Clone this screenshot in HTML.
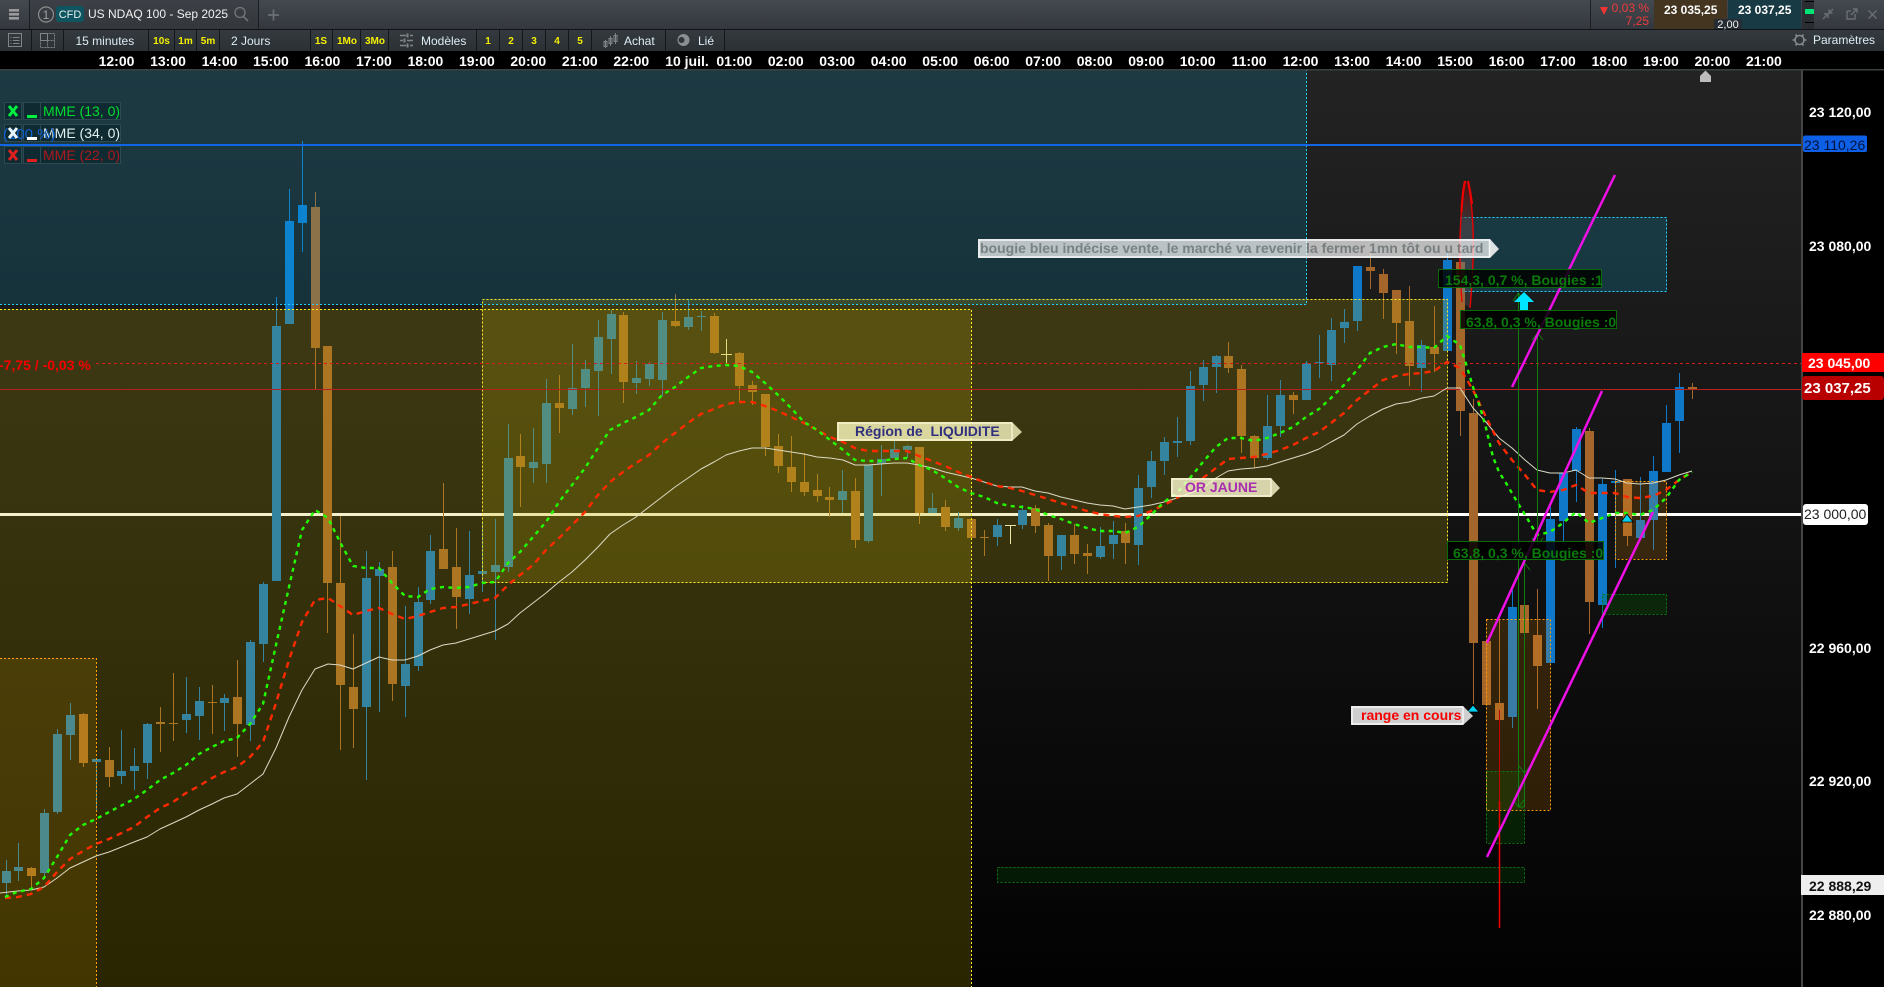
<!DOCTYPE html>
<html lang="fr"><head><meta charset="utf-8"><title>US NDAQ 100</title>
<style>html,body{margin:0;padding:0;background:#000;width:1884px;height:987px;overflow:hidden}svg{display:block;font-family:"Liberation Sans",sans-serif}</style></head>
<body>
<svg xmlns="http://www.w3.org/2000/svg" width="1884" height="987" viewBox="0 0 1884 987">
<defs>
<linearGradient id="bg" x1="0" y1="0" x2="0" y2="1"><stop offset="0" stop-color="#232323"/><stop offset="1" stop-color="#020202"/></linearGradient>
<linearGradient id="top" x1="0" y1="0" x2="0" y2="1"><stop offset="0" stop-color="#444950"/><stop offset="1" stop-color="#34383e"/></linearGradient>
<linearGradient id="tab" x1="0" y1="0" x2="0" y2="1"><stop offset="0" stop-color="#3d4147"/><stop offset="1" stop-color="#33373c"/></linearGradient>
<linearGradient id="tool" x1="0" y1="0" x2="0" y2="1"><stop offset="0" stop-color="#343a3f"/><stop offset="1" stop-color="#2b3034"/></linearGradient>
<linearGradient id="ell" x1="0" y1="0" x2="0" y2="1"><stop offset="0" stop-color="rgba(120,0,0,.55)"/><stop offset=".3" stop-color="rgba(110,70,70,.4)"/><stop offset="1" stop-color="rgba(120,110,110,.25)"/></linearGradient>
</defs>
<!-- chart bg -->
<rect x="0" y="70" width="1801" height="917" fill="url(#bg)"/>
<rect x="1801" y="70" width="83" height="917" fill="#000"/>
<!-- white level under zones -->
<rect x="0" y="513" width="1801" height="3" fill="#fff"/>
<!-- candles wicks -->
<g shape-rendering="crispEdges" fill="none">
<path stroke="#1078c8" stroke-width="1" d="M6.5 860V897M18.5 843V881M44.5 809V876M57.5 729V814M70.5 703V760M96.5 759V810M121.5 730V784M134.5 748V790M147.5 723V779M186.5 677V733M199.5 687V740M224.5 694V731M250.5 640V741M263.5 582V662M276.5 297V581M289.5 189V324M302.5 141V252M366.5 551V780M379.5 562V712M405.5 606V717M418.5 587V671M430.5 535V604M469.5 531V614M482.5 523V592M495.5 519V640M508.5 424V572M533.5 428V483M546.5 379V483M572.5 344V415M585.5 360V407M598.5 320V416M611.5 310V374M636.5 361V394M649.5 362V386M662.5 312V396M688.5 299V330M701.5 311V331M842.5 470V513M868.5 465V543M881.5 445V496M894.5 440V458M907.5 445V458M932.5 493V513M958.5 512V531M997.5 519V546M1022.5 505V529M1061.5 535V570M1100.5 527V559M1113.5 521V559M1138.5 475V565M1151.5 451V498M1164.5 437V475M1177.5 417V457M1190.5 371V445M1203.5 360V401M1216.5 355V393M1267.5 395V460M1280.5 380V437M1306.5 361V400M1319.5 335V378M1331.5 318V381M1344.5 309V343M1357.5 266V331M1421.5 340V392M1447.5 253V351M1512.5 590V728M1550.5 507V663M1563.5 473V542M1576.5 427V502M1602.5 479V628M1615.5 470V568M1640.5 477V538M1653.5 456V550M1666.5 405V472M1679.5 373V453"/>
<path stroke="#a5662b" stroke-width="1" d="M31.5 867V890M83.5 713V767M109.5 747V787M160.5 707V752M173.5 673V741M212.5 685V734M237.5 660V757M315.5 192V389M327.5 346V633M340.5 516V750M353.5 634V748M392.5 551V701M443.5 483V569M456.5 528V629M520.5 434V507M559.5 375V433M623.5 312V403M675.5 294V327M714.5 313V354M739.5 352V402M752.5 381V405M765.5 394V456M778.5 434V473M791.5 436V492M804.5 453V496M817.5 474V502M829.5 487V517M855.5 478V548M919.5 447V524M945.5 500V531M971.5 519V538M984.5 530V556M1035.5 505V533M1048.5 523V581M1074.5 524V564M1087.5 544V574M1125.5 523V564M1228.5 342V373M1241.5 365V453M1254.5 435V468M1293.5 392V414M1370.5 253V289M1383.5 269V319M1396.5 290V354M1409.5 286V386M1434.5 306V372M1460.5 262V436M1473.5 399V704M1486.5 641V705M1499.5 620V720M1524.5 605V633M1537.5 589V709M1589.5 428V634M1627.5 479V546M1692.5 383V399"/>
<!-- candle bodies -->
<path stroke="#1078c8" stroke-width="9" d="M6.5 871V883M18.5 867V871M44.5 813V873M57.5 734V812M70.5 715V735M96.5 759V762M121.5 771V776M134.5 766V771M147.5 724V763M186.5 714V720M199.5 701V716M224.5 698V703M250.5 642V725M263.5 584V644M276.5 326V581M289.5 221V324M302.5 205V223M366.5 578V707M379.5 569V576M405.5 664V686M418.5 602V666M430.5 551V600M469.5 575V599M482.5 571V574M495.5 565V572M508.5 458V567M533.5 462V468M546.5 403V464M572.5 388V409M585.5 369V388M598.5 337V371M611.5 314V339M636.5 378V383M649.5 364V379M662.5 320V380M688.5 317V327M701.5 316V317M842.5 491V500M868.5 465V541M881.5 459V464M894.5 449V458M907.5 446V450M932.5 508V513M958.5 518V528M997.5 525V537M1022.5 510V525M1061.5 535V556M1100.5 546V557M1113.5 535V544M1138.5 488V545M1151.5 461V487M1164.5 442V461M1177.5 441V443M1190.5 386V441M1203.5 367V385M1216.5 356V367M1267.5 426V458M1280.5 395V426M1306.5 363V400M1319.5 362V363M1331.5 330V365M1344.5 322V328M1357.5 266V321M1421.5 345V368M1447.5 260V351M1512.5 607V717M1550.5 519V663M1563.5 473V521M1576.5 429V471M1602.5 484V605M1615.5 481V483M1640.5 520V538M1653.5 471V520M1666.5 423V472M1679.5 387V421"/>
<path stroke="#a5662b" stroke-width="9" d="M31.5 868V876M83.5 714V763M109.5 760V777M160.5 722V724M173.5 723V724M212.5 702V703M237.5 697V724M315.5 207V348M327.5 346V583M340.5 583V685M353.5 687V709M392.5 567V684M443.5 549V569M456.5 567V597M520.5 456V467M559.5 403V408M623.5 315V382M675.5 321V326M714.5 316V353M739.5 353V386M752.5 385V392M765.5 394V447M778.5 446V466M791.5 467V482M804.5 482V492M817.5 490V496M829.5 497V500M855.5 491V540M919.5 447V513M945.5 507V527M971.5 519V538M984.5 537V538M1035.5 508V526M1048.5 525V556M1074.5 535V554M1087.5 553V556M1125.5 531V543M1228.5 356V368M1241.5 369V436M1254.5 436V458M1293.5 395V400M1370.5 267V271M1383.5 274V293M1396.5 290V323M1409.5 321V366M1434.5 347V354M1460.5 262V411M1473.5 413V643M1486.5 641V705M1499.5 703V720M1524.5 605V633M1537.5 635V666M1589.5 431V602M1627.5 479V536M1692.5 387V389"/>
<path stroke="#f5f0d0" stroke-width="1" d="M726.5 339V365M721 354.5H732M1010.5 525V544M1005 525.5H1016"/>
</g>
<!-- zones -->
<g shape-rendering="crispEdges">
<rect x="0" y="70" width="1307" height="234.5" fill="rgba(0,190,250,.15)"/>
<rect x="0" y="309" width="971.5" height="678" fill="rgba(198,180,0,.2)"/>
<rect x="482" y="299" width="966" height="284" fill="rgba(198,180,0,.2)"/>
<rect x="0" y="658" width="96.5" height="329" fill="rgba(255,170,0,.12)"/>
<rect x="1460" y="217" width="207" height="75" fill="rgba(0,190,250,.17)"/>
<rect x="1486" y="619.5" width="64.5" height="190.5" fill="rgba(255,150,0,.16)"/>
<rect x="1615" y="481.5" width="52" height="77.5" fill="rgba(255,150,0,.16)"/>
<rect x="1486" y="771" width="38.5" height="72" fill="rgba(0,130,0,.2)"/>
<rect x="1602" y="594" width="65" height="20" fill="rgba(0,130,0,.2)"/>
<rect x="997" y="867" width="527.5" height="15" fill="rgba(0,130,0,.17)"/>
<g fill="none" stroke-width="1" stroke-dasharray="2 2">
<path stroke="#25d0ff" d="M0 304.5H1306.5V70M1460.5 217.5H1666.5V291.5H1460.5Z"/>
<path stroke="#ffee22" d="M0 309.5H971.5V987M482.5 299.5H1447.5V582.5H482.5Z"/>
<path stroke="#ffa000" d="M0 658.5H96.5V987M1486.5 619.5H1550.5V810.5H1486.5ZM1615.5 481.5H1666.5V559.5H1615.5Z"/>
<path stroke="#0c7a18" d="M1486.5 771.5H1524.5V843.5H1486.5ZM1602.5 594.5H1666.5V614.5H1602.5ZM997.5 867.5H1524.5V882.5H997.5Z"/>
</g>
<!-- levels -->
<rect x="0" y="144" width="1801" height="2" fill="#1166e6"/>
<rect x="0" y="389" width="1801" height="1" fill="#b82020"/>
<path d="M96 363.5H1801" stroke="#d81c1c" stroke-width="1" stroke-dasharray="3 3" fill="none"/>
</g>
<text x="-1" y="370" font-size="14" font-weight="700" fill="#f40000">-7,75 / -0,03 %</text>
<!-- moving averages -->
<g fill="none" stroke-linejoin="round">
<polyline stroke="#dcdac4" stroke-width="1" points="0,893 18,891 31,890 44,887 57,878 70,868 83,862 96,856 109,852 134,842 147,837 160,829 173,823 186,817 199,810 212,804 224,798 237,794 250,784 263,774 276,748 289,717 302,690 315,669 328,664 340,665 353,669 366,663 379,657 392,660 405,660 418,656 430,650 443,645 456,643 469,639 482,635 495,631 508,624 520,613 533,603 546,593 559,582 572,572 585,560 598,547 610,534 623,525 636,517 649,507 662,497 675,487 688,478 701,469 714,462 726,455 739,451 752,448 765,448 778,450 791,452 804,454 817,457 830,458 843,460 855,465 868,465 881,464 894,463 907,463 919,465 932,468 945,472 958,475 971,478 984,482 997,486 1010,487 1022,487 1035,491 1048,493 1061,497 1074,500 1087,503 1100,505 1113,506 1125,509 1138,507 1151,505 1164,502 1177,498 1190,493 1203,488 1216,478 1228,471 1241,469 1254,468 1267,466 1280,462 1293,458 1306,454 1319,449 1331,442 1344,435 1357,424 1370,416 1383,409 1396,404 1409,402 1422,398 1434,396 1447,388 1460,388 1473,408 1486,422 1499,438 1512,448 1525,460 1537,470 1550,473 1563,473 1576,470 1589,478 1602,478 1615,479 1627,483 1640,484 1653,483 1666,480 1679,475 1692,471"/>
<polyline stroke="#ff2a00" stroke-width="2.4" stroke-dasharray="6 5" points="5,898 18,897 31,894 44,887 57,872 70,859 83,851 96,844 109,839 134,827 147,817 160,808 173,802 186,793 199,786 212,778 224,772 237,767 250,757 263,742 276,703 289,660 302,622 315,600 328,598 340,606 353,615 366,611 379,608 392,614 405,619 418,616 430,612 443,608 456,607 469,604 482,601 495,598 508,585 520,575 533,565 546,550 559,538 572,525 585,512 598,495 610,482 623,472 636,463 649,455 662,443 675,433 688,423 701,414 714,409 726,404 739,402 752,402 765,406 778,411 791,417 804,423 817,430 830,437 843,442 855,448 868,451 881,451 894,451 907,451 919,456 932,461 945,466 958,472 971,477 984,482 997,486 1010,488 1022,491 1035,495 1048,499 1061,503 1074,507 1087,511 1100,514 1113,516 1125,517 1138,516 1151,511 1164,505 1177,498 1190,488 1203,478 1216,468 1228,459 1241,458 1254,457 1267,454 1280,450 1293,445 1306,438 1319,432 1331,423 1344,413 1357,400 1370,390 1383,380 1396,376 1409,374 1422,373 1434,371 1447,362 1460,368 1473,390 1486,417 1499,443 1512,460 1525,475 1537,490 1550,492 1563,490 1576,485 1589,493 1602,493 1615,493 1627,497 1640,498 1653,496 1666,490 1679,480 1692,472"/>
<polyline stroke="#22ff00" stroke-width="2.4" stroke-dasharray="4 4.5" points="5,897 17,892 31,889 44,878 57,857 70,835 83,825 96,819 109,812 134,799 147,790 160,780 173,773 186,765 199,754 212,747 224,741 237,738 250,724 263,704 276,645 289,587 302,530 315,510 328,518 340,542 353,566 366,568 379,568 392,583 405,596 418,597 430,589 443,587 456,588 469,587 482,583 495,582 508,563 520,552 533,537 546,522 559,502 572,485 585,468 598,448 610,430 623,423 636,417 649,410 662,395 675,387 688,377 701,368 714,366 726,365 739,366 752,372 765,383 778,395 791,408 804,422 817,430 830,440 843,450 855,460 868,461 881,461 894,459 907,458 919,465 932,470 945,478 958,487 971,493 984,497 997,503 1010,506 1022,507 1035,509 1048,515 1061,519 1074,524 1087,528 1100,531 1113,531 1125,533 1138,527 1151,515 1164,502 1177,493 1190,478 1203,462 1216,447 1228,438 1241,438 1254,441 1267,438 1280,433 1293,427 1306,417 1319,409 1331,398 1344,385 1357,370 1370,353 1383,347 1396,344 1409,347 1422,347 1434,348 1447,336 1460,345 1467,367 1473,387 1480,407 1486,428 1493,457 1499,472 1506,483 1519,505 1524,513 1537,535 1550,532 1563,523 1576,512 1589,523 1602,518 1615,513 1627,513 1640,515 1653,510 1666,498 1679,480 1692,472"/>
</g>
<!-- red ellipse + spike -->
<path d="M1465 181C1460 212 1458 255 1462 302L1470 308C1475 255 1474 212 1468 181Z" fill="url(#ell)"/>
<path d="M1465 181C1460 212 1458 255 1462 302M1468 181C1474 212 1475 255 1470 308" fill="none" stroke="#e80000" stroke-width="1.4"/>
<path d="M1465 181C1463 190 1462 200 1461.5 212M1468 181C1470 190 1471 196 1472 204" fill="none" stroke="#f00000" stroke-width="2.2"/>
<path d="M1499.5 710V928" stroke="#c80000" stroke-width="1" fill="none"/>
<path d="M1499.5 801V928" stroke="#f00000" stroke-width="1.5" fill="none"/>
<!-- green measures -->
<g fill="none" stroke="#0f7f0f" stroke-width="1">
<path d="M1518.5 293V807H1524.5V563M1537.5 333V545"/>
<path d="M1513 301L1518.5 293L1524 301M1532 340L1537.5 333L1543 340M1532 538L1537.5 545L1543 538M1519 570L1524.5 563L1530 570M1513 800L1518.5 807L1524 800M1519 766L1524.5 773L1530 766"/>
</g>
<!-- magenta -->
<g stroke="#ee10e6" stroke-width="2.5" fill="none">
<path d="M1512 387L1615 175M1487 643L1602 391M1487 857L1653 512"/>
</g>
<!-- cyan markers -->
<path d="M1524 292L1534 302H1528V311H1520V302H1514Z" fill="#00e5ff"/>
<path d="M1473 705L1479 712H1467Z" fill="#00d0f0" stroke="#000" stroke-width=".8"/>
<path d="M1627 514L1633 522H1621Z" fill="#00d0f0" stroke="#000" stroke-width=".8"/>
<!-- annotations -->
<rect x="978" y="239" width="512" height="19" fill="rgba(255,255,255,.7)"/>
<polygon points="1490,239 1499,249 1490,258" fill="rgba(255,255,255,.85)"/>
<path d="M979 240H1489.5V257H979Z" fill="none" stroke="rgba(255,255,255,.9)" stroke-width="1.5"/>
<text x="980" y="253" font-size="14" font-weight="700" fill="rgba(60,70,75,.52)">bougie bleu indécise vente, le marché va revenir la fermer 1mn tôt ou u tard</text>
<polygon points="837,422 1012,422 1022,432 1012,441 837,441" fill="rgba(255,252,200,.78)"/>
<path d="M838 423H1012V440H838Z" fill="none" stroke="#fffbd8" stroke-width="1.2"/>
<text x="855" y="436" font-size="14" font-weight="700" fill="#30307e" xml:space="preserve">Région de  LIQUIDITE</text>
<polygon points="1171,478 1271,478 1280,488 1271,497 1171,497" fill="rgba(255,252,210,.8)"/>
<path d="M1172 479H1271V496H1172Z" fill="none" stroke="#fffbe0" stroke-width="1.2"/>
<text x="1185" y="492" font-size="14" font-weight="700" fill="#a92eb0">OR JAUNE</text>
<polygon points="1351,706 1463,706 1473,716 1463,725 1351,725" fill="#cfcfcf"/>
<path d="M1352 707H1463V724H1352Z" fill="none" stroke="#fff" stroke-width="1.2"/>
<text x="1361" y="720" font-size="14" font-weight="700" fill="#f80000">range en cours</text>
<g font-size="14" font-weight="700" fill="#0a7a0a">
<rect x="1438.5" y="269.5" width="163" height="18" fill="rgba(0,0,0,.85)" stroke="#0a6a0a"/>
<text x="1445" y="285">154,3, 0,7 %, Bougies :1</text>
<rect x="1460.5" y="310.5" width="156" height="18" fill="rgba(0,0,0,.85)" stroke="#0a6a0a"/>
<text x="1466" y="327">63,8, 0,3 %, Bougies :0</text>
<rect x="1447.5" y="541.5" width="156" height="18" fill="rgba(0,0,0,.85)" stroke="#0a6a0a"/>
<text x="1453" y="558">63,8, 0,3 %, Bougies :0</text>
</g>
<!-- home marker -->
<path d="M1700 82V76L1705.5 70.5L1711 76V82Z" fill="#bdbdbd"/>
<!-- legend -->
<g shape-rendering="crispEdges" fill="#0f2a30" stroke="#2c4a50">
<rect x="4.5" y="102.5" width="17" height="17"/><rect x="23.5" y="102.5" width="17" height="17"/><rect x="40.5" y="102.5" width="80" height="17"/>
<rect x="4.5" y="124.5" width="17" height="17"/><rect x="23.5" y="124.5" width="17" height="17"/><rect x="40.5" y="124.5" width="80" height="17"/>
<rect x="4.5" y="146.5" width="17" height="17"/><rect x="23.5" y="146.5" width="17" height="17"/><rect x="40.5" y="146.5" width="80" height="17"/>
</g>
<g font-size="14">
<text x="43" y="116" fill="#00dd30">MME (13, 0)</text>
<text x="43" y="138" fill="#dff0f0">MME (34, 0)</text>
<text x="43" y="160" fill="#aa1a1e">MME (22, 0)</text>
</g>
<text x="3" y="139" font-size="15" fill="#0d62d0">(100 %)</text>
<g stroke-width="3" fill="none">
<path d="M9 106L17 116M17 106L9 116" stroke="#00f040"/>
<path d="M9 128L17 138M17 128L9 138" stroke="#e8f4f8"/>
<path d="M9 150L17 160M17 150L9 160" stroke="#e02020"/>
</g>
<rect x="27" y="115" width="10" height="3" fill="#00f040"/>
<rect x="27" y="137" width="10" height="3" fill="#fff"/>
<rect x="27" y="159" width="10" height="3" fill="#e02020"/>
<!-- axis right -->
<rect x="1801" y="70" width="2" height="917" fill="#454545"/>
<g font-size="14" font-weight="700" fill="#fff">
<text x="1809" y="117">23 120,00</text>
<text x="1809" y="251">23 080,00</text>
<text x="1809" y="653">22 960,00</text>
<text x="1809" y="786">22 920,00</text>
<text x="1809" y="920">22 880,00</text>
</g>
<rect x="1803" y="135.5" width="64" height="16.5" rx="2" fill="#0d5fe6"/>
<text x="1804" y="150" font-size="14" fill="#03123c">23 110,26</text>
<rect x="1802" y="353" width="82" height="19" fill="#ff0000"/>
<text x="1808" y="368" font-size="14" font-weight="700" fill="#fff">23 045,00</text>
<rect x="1802" y="376" width="82" height="24" rx="3" fill="#b80000"/>
<text x="1804" y="393" font-size="15" font-weight="700" fill="#fff">23 037,25</text>
<rect x="1803" y="504" width="65" height="21" rx="3" fill="#fff"/>
<text x="1804" y="519" font-size="14" fill="#222">23 000,00</text>
<rect x="1801" y="875" width="83" height="20" fill="#eeeeee"/>
<text x="1809" y="891" font-size="14" font-weight="700" fill="#111">22 888,29</text>
<!-- top bar -->
<rect x="0" y="0" width="1884" height="29" fill="url(#top)"/>
<rect x="0" y="29" width="1884" height="1" fill="#101214"/>
<rect x="29" y="0" width="229" height="29" fill="url(#tab)"/>
<rect x="29" y="0" width="1" height="29" fill="#1c1f22"/><rect x="258" y="0" width="1" height="29" fill="#1c1f22"/>
<rect x="9" y="9" width="10" height="2.6" fill="#9a9a9a"/><rect x="9" y="13" width="10" height="2.6" fill="#9a9a9a"/><rect x="9" y="17" width="10" height="2.6" fill="#9a9a9a"/>
<circle cx="46" cy="14.5" r="7.5" fill="none" stroke="#8c8c8c" stroke-width="1.2"/>
<text x="46" y="19" font-size="12" fill="#a0a0a0" text-anchor="middle">1</text>
<rect x="56" y="6" width="28" height="16" rx="3" fill="#0e5560"/>
<text x="70" y="18" font-size="11" fill="#e8f0f0" text-anchor="middle">CFD</text>
<text x="88" y="18" font-size="12" fill="#f0f0f0">US NDAQ 100 - Sep 2025</text>
<circle cx="240" cy="12.5" r="5" fill="none" stroke="#74787c" stroke-width="1.3"/><path d="M243.5 16.5L248 21" stroke="#74787c" stroke-width="1.5"/>
<path d="M268 15H279M273.5 9.5V20.5" stroke="#6c7075" stroke-width="1.7" fill="none"/>
<rect x="1590" y="0" width="1" height="29" fill="#1c1f22"/>
<path d="M1600 7H1608L1604 15Z" fill="#f03434"/>
<text x="1649" y="12" font-size="12" fill="#ee3a3a" text-anchor="end">0,03 %</text>
<text x="1649" y="25" font-size="12" fill="#ee3a3a" text-anchor="end">7,25</text>
<rect x="1654" y="0" width="73" height="29" fill="#43351f"/>
<rect x="1728" y="0" width="73" height="29" fill="#173a44"/>
<text x="1664" y="14" font-size="12" font-weight="700" fill="#fff">23 035,25</text>
<text x="1738" y="14" font-size="12" font-weight="700" fill="#fff">23 037,25</text>
<rect x="1714" y="19" width="28" height="10" fill="#262c34"/>
<text x="1728" y="28" font-size="11" fill="#f0f0f0" text-anchor="middle">2,00</text>
<rect x="1802" y="0" width="12" height="29" fill="#2a2e33"/>
<rect x="1805" y="1" width="9" height="1" fill="#000"/><rect x="1805" y="22" width="9" height="1" fill="#000"/>
<rect x="1805" y="9" width="9" height="5" fill="#00e676"/>
<g stroke="#6a6e72" stroke-width="1.4" fill="none">
<path d="M1823 19L1828 14M1828 18V14H1824M1833 9L1829 13M1829 9.5V13H1832.5"/>
<path d="M1847 11H1851M1847 11V19H1855V14M1851 15L1857 9M1853 9H1857V13"/>
<path d="M1868.5 10.5L1876.5 18.5M1876.5 10.5L1868.5 18.5"/>
</g>
<!-- toolbar -->
<rect x="0" y="30" width="1884" height="21" fill="url(#tool)"/>
<g fill="#14171a" shape-rendering="crispEdges">
<rect x="31" y="30" width="1" height="21"/><rect x="63" y="30" width="1" height="21"/><rect x="148" y="30" width="1" height="21"/><rect x="174" y="30" width="1" height="21"/><rect x="196" y="30" width="1" height="21"/><rect x="219" y="30" width="1" height="21"/><rect x="310" y="30" width="1" height="21"/><rect x="332" y="30" width="1" height="21"/><rect x="360" y="30" width="1" height="21"/><rect x="388" y="30" width="1" height="21"/><rect x="476" y="30" width="1" height="21"/><rect x="499" y="30" width="1" height="21"/><rect x="522" y="30" width="1" height="21"/><rect x="545" y="30" width="1" height="21"/><rect x="568" y="30" width="1" height="21"/><rect x="591" y="30" width="1" height="21"/><rect x="665" y="30" width="1" height="21"/><rect x="724" y="30" width="1" height="21"/>
</g>
<g fill="none" stroke="#80858a" stroke-width="1">
<rect x="8.5" y="33.5" width="13" height="13"/><path d="M10.5 37.5H11.5M13 37.5H19.5M10.5 40.5H11.5M13 40.5H19.5M10.5 43.5H11.5M13 43.5H19.5"/>
<rect x="40.5" y="33.5" width="14" height="14" stroke-dasharray="2 1"/><rect x="40.5" y="33.5" width="7" height="7"/><path d="M47.5 40.5H54.5M47.5 40.5V47.5" stroke-dasharray="2 1"/>
<path d="M400 35.5H406M410 35.5H413M400 40.5H403M407 40.5H413M400 45.5H406M410 45.5H413" stroke-width="1.6"/>
<path d="M407.5 33.5V37.5M404.5 38.5V42.5M407.5 43.5V47.5" stroke-width="2"/>
<rect x="604" y="41.5" width="3" height="5"/><rect x="609" y="38.5" width="3" height="5"/><rect x="614" y="35.5" width="3" height="6"/>
<path d="M605.5 40V48M610.5 36V46M615.5 33V44"/>
</g>
<circle cx="683.5" cy="40" r="6" fill="#8a8f94"/><circle cx="681.5" cy="40" r="3" fill="#30353a"/>
<g font-size="12" fill="#dcecf4">
<text x="75.5" y="45">15 minutes</text>
<text x="231" y="45">2 Jours</text>
<text x="421" y="45">Modèles</text>
<text x="624" y="45">Achat</text>
<text x="698" y="45">Lié</text>
<text x="1813" y="44">Paramètres</text>
</g>
<g font-size="10" font-weight="700" fill="#f5f000" text-anchor="middle">
<text x="161.5" y="44">10s</text><text x="185.5" y="44">1m</text><text x="208" y="44">5m</text>
<text x="321" y="44">1S</text><text x="347" y="44">1Mo</text><text x="375" y="44">3Mo</text>
<text x="488" y="44">1</text><text x="511" y="44">2</text><text x="534" y="44">3</text><text x="557" y="44">4</text><text x="580" y="44">5</text>
</g>
<g fill="none" stroke="#858a8c" stroke-width="1.6">
<circle cx="1799.5" cy="40" r="4.5"/>
<path d="M1792.5 40H1795M1804 40H1806.5M1795.5 34.5L1796.8 36M1803.5 34.5L1802.2 36M1795.5 45.5L1796.8 44M1803.5 45.5L1802.2 44"/>
</g>
<!-- time axis -->
<rect x="0" y="51" width="1884" height="18" fill="#000"/>
<rect x="0" y="69" width="1884" height="1.5" fill="#3b4040"/>
<g font-size="14" font-weight="700" fill="#fff" text-anchor="middle">
<text x="116.5" y="66">12:00</text><text x="168" y="66">13:00</text><text x="219.5" y="66">14:00</text><text x="270.9" y="66">15:00</text><text x="322.4" y="66">16:00</text><text x="373.9" y="66">17:00</text><text x="425.4" y="66">18:00</text><text x="476.9" y="66">19:00</text><text x="528.3" y="66">20:00</text><text x="579.8" y="66">21:00</text><text x="631.3" y="66">22:00</text><text x="687" y="66">10 juil.</text><text x="734.3" y="66">01:00</text><text x="785.8" y="66">02:00</text><text x="837.2" y="66">03:00</text><text x="888.7" y="66">04:00</text><text x="940.2" y="66">05:00</text><text x="991.7" y="66">06:00</text><text x="1043.1" y="66">07:00</text><text x="1094.6" y="66">08:00</text><text x="1146.1" y="66">09:00</text><text x="1197.6" y="66">10:00</text><text x="1249.1" y="66">11:00</text><text x="1300.5" y="66">12:00</text><text x="1352" y="66">13:00</text><text x="1403.5" y="66">14:00</text><text x="1455" y="66">15:00</text><text x="1506.5" y="66">16:00</text><text x="1557.9" y="66">17:00</text><text x="1609.4" y="66">18:00</text><text x="1660.9" y="66">19:00</text><text x="1712.4" y="66">20:00</text><text x="1763.9" y="66">21:00</text>
</g>
</svg>
</body></html>
